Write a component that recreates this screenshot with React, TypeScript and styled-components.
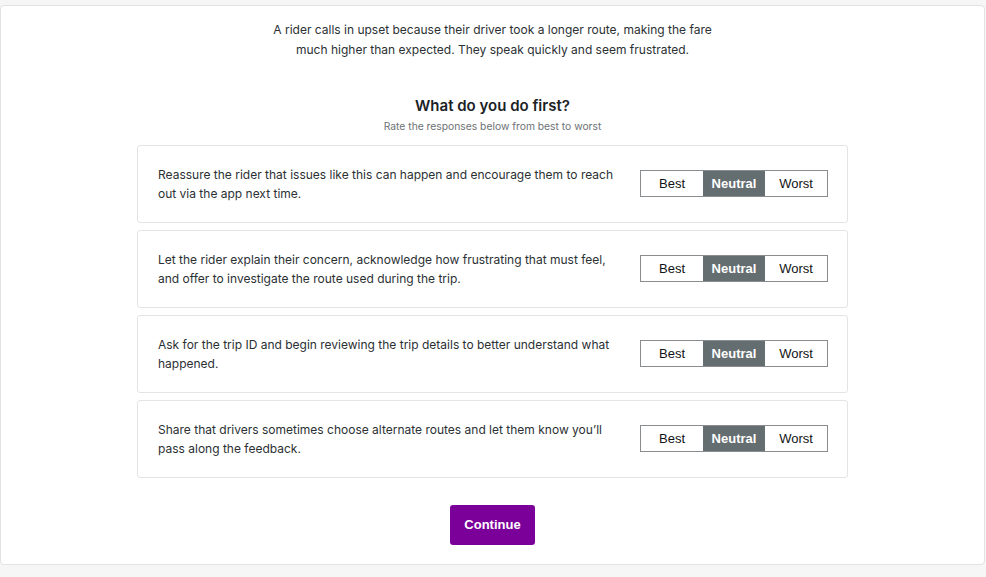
import { useState } from 'react';
import styled, { createGlobalStyle } from 'styled-components';

const GlobalStyle = createGlobalStyle`
  body {
    margin: 0;
    background: #f6f6f6;
    font-family: Inter, 'Noto Sans', sans-serif;
  }
`;

const Panel = styled.main`
  box-sizing: border-box;
  margin-top: 5px;
  width: 985px;
  background: #fff;
  border: 1px solid #e2e2e2;
  border-radius: 4px;
  padding: 14px 0 19px;
  display: flex;
  flex-direction: column;
  align-items: center;
`;

const Scenario = styled.p`
  margin: 0;
  width: 450px;
  font-size: 12px;
  line-height: 19.5px;
  color: #2b3033;
  text-align: center;
`;

const Question = styled.h2`
  margin: 37px 0 0;
  font-size: 15px;
  line-height: 20px;
  font-weight: 600;
  color: #1b2226;
`;

const Hint = styled.p`
  margin: 3px 0 0;
  font-size: 10.3px;
  line-height: 14px;
  color: #6d7275;
`;

const CardList = styled.div`
  margin-top: 12px;
  width: 711px;
  display: flex;
  flex-direction: column;
  gap: 7px;
`;

const Card = styled.div`
  box-sizing: border-box;
  height: 78px;
  border: 1px solid #e4e4e4;
  border-radius: 3px;
  padding: 0 19px 0 20px;
  display: flex;
  align-items: center;
  gap: 20px;
`;

const CardText = styled.p`
  flex: 1;
  margin: 0;
  font-size: 12px;
  line-height: 19.5px;
  color: #2b3033;
`;

const Segments = styled.div`
  display: flex;
  margin-bottom: 1px;
  border: 1px solid #8a8d8f;
`;

const Segment = styled.button<{ $active?: boolean }>`
  width: 62px;
  height: 25px;
  padding: 0 0 1px;
  border: none;
  font-family: 'Liberation Sans', Arial, sans-serif;
  font-size: 13px;
  font-weight: ${(p) => (p.$active ? 700 : 400)};
  color: ${(p) => (p.$active ? '#fff' : '#111416')};
  background: ${(p) => (p.$active ? '#646d70' : '#fff')};
  cursor: pointer;
`;

const Continue = styled.button`
  margin-top: 27px;
  width: 85px;
  height: 40px;
  padding: 0 0 1px;
  border: none;
  border-radius: 3px;
  background: #7a0099;
  color: #fff;
  font-family: 'Liberation Sans', Arial, sans-serif;
  font-weight: 700;
  font-size: 13px;
  cursor: pointer;
`;

const responses = [
  'Reassure the rider that issues like this can happen and encourage them to reach out via the app next time.',
  'Let the rider explain their concern, acknowledge how frustrating that must feel, and offer to investigate the route used during the trip.',
  'Ask for the trip ID and begin reviewing the trip details to better understand what happened.',
  'Share that drivers sometimes choose alternate routes and let them know you\u2019ll pass along the feedback.',
];

const options = ['Best', 'Neutral', 'Worst'];

const App = (): JSX.Element => {
  const [ratings, setRatings] = useState<string[]>(responses.map(() => 'Neutral'));

  const rate = (index: number, value: string) =>
    setRatings((prev) => prev.map((r, i) => (i === index ? value : r)));

  return (
    <>
      <GlobalStyle />
      <Panel>
        <Scenario>
          A rider calls in upset because their driver took a longer route, making the fare much
          higher than expected. They speak quickly and seem frustrated.
        </Scenario>
        <Question>What do you do first?</Question>
        <Hint>Rate the responses below from best to worst</Hint>
        <CardList>
          {responses.map((text, i) => (
            <Card key={i}>
              <CardText>{text}</CardText>
              <Segments>
                {options.map((opt) => (
                  <Segment key={opt} $active={ratings[i] === opt} onClick={() => rate(i, opt)}>
                    {opt}
                  </Segment>
                ))}
              </Segments>
            </Card>
          ))}
        </CardList>
        <Continue>Continue</Continue>
      </Panel>
    </>
  );
};

export default App;
